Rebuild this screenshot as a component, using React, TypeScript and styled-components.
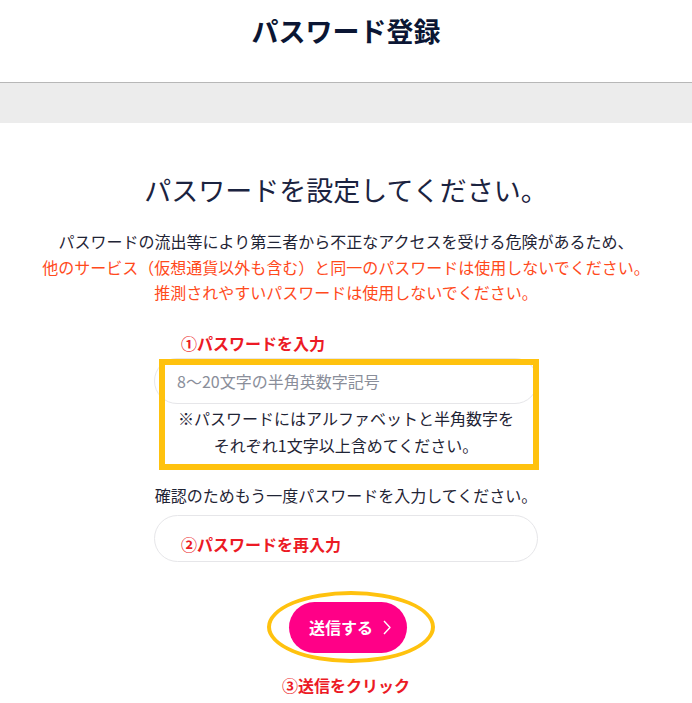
import { createGlobalStyle, styled } from 'styled-components';

const GlobalStyle = createGlobalStyle`
  html, body {
    margin: 0;
    padding: 0;
    background: #fff;
  }
  body {
    font-family: 'Noto Sans CJK JP', 'Noto Sans', sans-serif;
    color: #1f2435;
  }
`;

const Header = styled.header`
  height: 83px;
  box-sizing: border-box;
  border-bottom: 1px solid #b7b7b7;
  display: flex;
  justify-content: center;
  padding-top: 16px;
`;

const Title = styled.h1`
  margin: 0;
  font-size: 27px;
  line-height: 30px;
  font-weight: 700;
  color: #0b1634;
`;

const Band = styled.div`
  height: 40px;
  background: #ececec;
`;

const Main = styled.main`
  display: flex;
  flex-direction: column;
  align-items: center;
  padding-top: 49px;
`;

const Heading = styled.h2`
  margin: 0;
  font-size: 27px;
  line-height: 36px;
  font-weight: 400;
  color: #1b2340;
`;

const Lead = styled.p`
  margin: 21px 0 0;
  font-size: 16px;
  line-height: 25.6px;
  text-align: center;
  color: #1f2435;
`;

const Warn = styled.span`
  color: #ff4a1c;
`;

const Column = styled.div`
  width: 384px;
  display: flex;
  flex-direction: column;
`;

const Mark = styled.div<{ $center?: boolean }>`
  font-size: 16px;
  line-height: 24px;
  font-weight: 700;
  color: #ec1a25;
  text-align: ${(p) => (p.$center ? 'center' : 'left')};
`;

const StepLabel = styled(Mark)`
  margin-top: 25px;
  padding-left: 27px;
`;

const FieldGroup = styled.div`
  position: relative;
  margin-top: 3px;
`;

const Field = styled.div<{ $tall?: boolean }>`
  height: ${(p) => (p.$tall ? 47 : 46)}px;
  box-sizing: border-box;
  border: 1px solid #e6e6e9;
  border-radius: 24px;
  display: flex;
  align-items: center;
  padding-left: 22px;
  font-size: 16px;
  background: #fff;
`;

const Placeholder = styled.span`
  color: #8a8e9a;
`;

const Note = styled.p`
  margin: 0;
  font-size: 16px;
  line-height: 27px;
  text-align: center;
  padding-top: 1px;
`;

const Frame = styled.div`
  position: absolute;
  left: 5px;
  top: 1px;
  width: 380px;
  height: 111px;
  box-sizing: border-box;
  border: 6px solid #ffc20e;
  pointer-events: none;
`;

const Confirm = styled.p`
  margin: 23px 0 0;
  font-size: 16px;
  line-height: 26px;
  text-align: center;
`;

const ReField = styled(Field)`
  margin-top: 7px;
  align-items: flex-start;
  padding-top: 16px;
  padding-left: 26px;
`;

const SubmitWrap = styled.div`
  position: relative;
  margin-top: 40px;
  margin-left: 4px;
`;

const Submit = styled.button`
  width: 118px;
  height: 51px;
  border: none;
  border-radius: 26px;
  background: #ff0087;
  color: #fff;
  font-family: inherit;
  font-size: 16px;
  font-weight: 700;
  display: flex;
  align-items: center;
  justify-content: center;
  gap: 10px;
  padding: 0 0 0 4px;
  cursor: pointer;
`;

const Ring = styled.div`
  position: absolute;
  left: -22px;
  top: -11px;
  width: 168px;
  height: 72px;
  box-sizing: border-box;
  border: 4px solid #ffc20e;
  border-radius: 50%;
  pointer-events: none;
`;

const ClickLabel = styled(Mark)`
  margin-top: 20px;
  padding-bottom: 10px;
`;

const Chevron = () => (
  <svg width="8" height="15" viewBox="0 0 8 15" fill="none">
    <polyline points="1,1 7,7.5 1,14" stroke="#fff" strokeWidth="1.4" strokeLinejoin="round" />
  </svg>
);

export default function App() {
  return (
    <>
      <GlobalStyle />
      <Header>
        <Title>パスワード登録</Title>
      </Header>
      <Band />
      <Main>
        <Heading>パスワードを設定してください。</Heading>
        <Lead>
          パスワードの流出等により第三者から不正なアクセスを受ける危険があるため、
          <br />
          <Warn>
            他のサービス（仮想通貨以外も含む）と同一のパスワードは使用しないでください。
            <br />
            推測されやすいパスワードは使用しないでください。
          </Warn>
        </Lead>
        <Column>
          <StepLabel>①パスワードを入力</StepLabel>
          <FieldGroup>
            <Field>
              <Placeholder>8〜20文字の半角英数字記号</Placeholder>
            </Field>
            <Note>
              ※パスワードにはアルファベットと半角数字を
              <br />
              それぞれ1文字以上含めてください。
            </Note>
            <Frame />
          </FieldGroup>
          <Confirm>確認のためもう一度パスワードを入力してください。</Confirm>
          <ReField $tall>
            <Mark>②パスワードを再入力</Mark>
          </ReField>
        </Column>
        <SubmitWrap>
          <Submit>
            送信する
            <Chevron />
          </Submit>
          <Ring />
        </SubmitWrap>
        <ClickLabel $center>③送信をクリック</ClickLabel>
      </Main>
    </>
  );
}
